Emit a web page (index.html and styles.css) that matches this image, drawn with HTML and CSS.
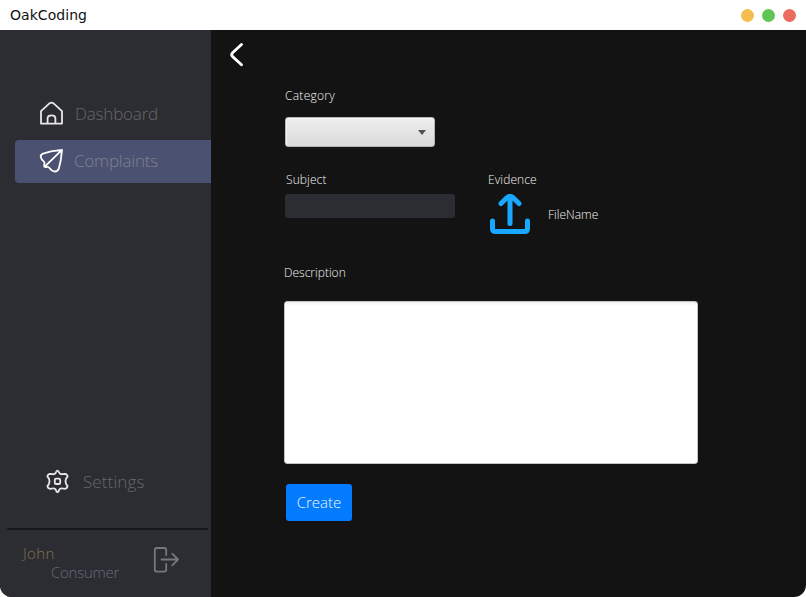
FILE: index.html
```html
<!DOCTYPE html>
<html lang="en">
<head>
<meta charset="utf-8">
<title>OakCoding</title>
<link rel="stylesheet" href="styles.css">
</head>
<body>
<div class="window">
  <header class="titlebar">
    <span class="title">OakCoding</span>
    <div class="controls"><i class="dot yellow"></i><i class="dot green"></i><i class="dot red"></i></div>
  </header>
  <div class="body">
    <aside class="sidebar">
      <nav class="nav">
        <a class="item dashboard">
          <svg width="26" height="26" viewBox="0 0 26 26"><path d="M3 22.6V10.2L11.7 2.2Q13.5 .9 15.3 2.2L24 10.2V22.6ZM9.6 22.4V17Q9.9 14.4 13.5 14.4T17.4 17V22.4"/></svg>
          <span>Dashboard</span>
        </a>
        <a class="item active">
          <svg width="26" height="26" viewBox="0 0 26 26"><path d="M24 1.8L13 3.4L5 5.6Q2 6.8 2.9 9.4Q3.5 12 5.8 13.6Q7.2 14.8 6.2 16.6Q5.6 19.6 8.3 19Q10.5 18.5 11.5 20Q13.5 22.8 16 23.4Q19.5 24 20.8 20.6L22.8 12ZM24 1.8L7 18.4"/></svg>
          <span>Complaints</span>
        </a>
      </nav>
      <a class="item settings">
        <svg width="26" height="26" viewBox="0 0 26 26"><path d="M13.5 2.6Q14.6 2.6 15 4.4Q16 6.6 18.2 6.2L20.8 5.8Q23.2 6 23.6 8.4L22 10.8Q20.8 13.3 22 15.8L23.6 18.2Q23.2 20.6 20.8 20.8L18.2 20.4Q16 20 15 22.2Q14.6 24 13.5 24Q12.4 24 12 22.2Q11 20 8.8 20.4L6.2 20.8Q3.8 20.6 3.4 18.2L5 15.8Q6.2 13.3 5 10.8L3.4 8.4Q3.8 6 6.2 5.8L8.8 6.2Q11 6.6 12 4.4Q12.4 2.6 13.5 2.6Z"/><rect x="10.8" y="10.6" width="5.4" height="5.4" rx="1.3"/></svg>
        <span>Settings</span>
      </a>
      <div class="divider"></div>
      <div class="profile">
        <div class="names"><span class="first">John</span><span class="role">Consumer</span></div>
        <svg class="logout" width="28" height="28" viewBox="0 0 28 28"><path d="M14.2 9V4Q14.2 2 12.2 2H4.8Q2.8 2 2.8 4V23.6Q2.8 25.6 4.8 25.6H12.2Q14.2 25.6 14.2 23.6V18M9.5 13.5H26M20.3 7.7L26 13.5L20.3 19.3"/></svg>
      </div>
    </aside>
    <main class="main">
      <svg class="back" width="16" height="26" viewBox="0 0 16 26"><path d="M12.5 2.4L3.6 10.8Q1.8 12.7 3.6 14.6L12.5 22.8"/></svg>
      <div class="form">
        <label class="label category">Category</label>
        <div class="select"><i class="arrow"></i></div>
        <div class="row">
          <div class="subject">
            <label class="label">Subject</label>
            <div class="input"></div>
          </div>
          <div class="evidence">
            <label class="label">Evidence</label>
            <div class="upload">
              <svg width="40" height="40" viewBox="0 0 40 40"><path d="M2.5 27V34.5Q2.5 37.5 5.5 37.5H34.5Q37.5 37.5 37.5 34.5V27M20 29.5V3M11 9.5L16.8 3.8Q20 1 23.2 3.8L29 9.5"/></svg>
              <span class="label filename">FileName</span>
            </div>
          </div>
        </div>
        <label class="label description">Description</label>
        <div class="textarea"></div>
        <button class="create">Create</button>
      </div>
    </main>
  </div>
</div>
</body>
</html>
```
FILE: styles.css
```css
* { box-sizing: border-box; }
body { margin: 0; background: #fff; font-family: "Open Sans", "Noto Sans", sans-serif; font-weight: 300; }
svg { display: block; flex: none; fill: none; stroke-linecap: round; stroke-linejoin: round; }
.window { width: 806px; height: 597px; display: flex; flex-direction: column; overflow: hidden; }
.titlebar { height: 30px; flex: none; display: flex; align-items: center; justify-content: space-between; padding: 0 10px; background: #fff; }
.title { font: 400 14px/30px "DejaVu Sans", sans-serif; color: #111; letter-spacing: 0.05px; }
.controls { display: flex; gap: 8px; }
.dot { width: 13px; height: 13px; border-radius: 50%; }
.yellow { background: #f5bd4f; }
.green { background: #61c554; }
.red { background: #ed6a5e; }
.body { flex: 1; display: flex; border-radius: 0 0 12px 12px; overflow: hidden; background: #131313; }

.sidebar { width: 211px; flex: none; display: flex; flex-direction: column; background: #2c2d32; }
.nav { padding: 63px 0 0 15px; }
.item { display: flex; align-items: center; font-size: 17px; line-height: 24px; letter-spacing: -0.2px; color: #66676b; }
.item svg { stroke: #e8e8e8; stroke-width: 1.8; }
.dashboard { height: 42px; padding-left: 23px; gap: 11px; margin-bottom: 5px; }
.active { height: 43px; padding: 0 0 1px 23px; gap: 10px; background: #4b5170; border-radius: 4px 0 0 4px; color: #7e8190; }
.active svg { stroke: #fff; }
.settings { margin: 286px 0 0 44px; height: 26px; gap: 13px; letter-spacing: 0.1px; }
.settings svg { margin-top: -2px; }
.divider { width: 201px; height: 2px; margin: 33px 0 0 7px; background: #17181a; border-radius: 1px; }
.profile { display: flex; padding: 14px 0 0 23px; }
.names { width: 129px; display: flex; flex-direction: column; font-size: 15px; line-height: 19px; }
.first { color: #80704b; letter-spacing: 0.4px; }
.role { padding-left: 28px; color: #686a7b; letter-spacing: -0.25px; }
.logout { stroke: #77787c; stroke-width: 1.8; margin-top: 2px; }

.main { flex: 1; padding: 12px 0 0 18px; }
.back { stroke: #fff; stroke-width: 2.8; }
.form { padding: 19px 0 0 55px; }
.label { display: block; font-size: 12px; line-height: 18px; color: #f4f4f4; }
.category { margin-left: 1px; letter-spacing: 0.28px; }
.select { width: 150px; height: 30px; margin: 12px 0 0 1px; padding-right: 8px; display: flex; align-items: center; justify-content: flex-end; border: 1px solid #b4b4b4; border-radius: 3px; background: linear-gradient(#efefef, #d9d9d9); box-shadow: inset 0 1px #fafafa, inset 1px 0 #f4f4f4; }
.arrow { border: 4.5px solid transparent; border-top: 5px solid #505050; border-bottom: 0; }
.row { display: flex; margin-top: 24px; }
.subject { width: 204px; }
.subject .label { margin-left: 2px; letter-spacing: 0.1px; }
.input { width: 170px; height: 24px; margin: 5px 0 0 1px; border-radius: 3px; background: #2c2d32; }
.evidence .label { letter-spacing: 0.1px; }
.upload { display: flex; align-items: center; gap: 18px; margin: 5px 0 0 2px; }
.upload svg { stroke: #18a8ff; stroke-width: 5; }
.upload .filename { padding-top: 2px; letter-spacing: 0; }
.description { margin-top: 30px; }
.textarea { width: 414px; height: 163px; margin-top: 19px; border: 1px solid #c4c4c4; border-radius: 3px; background: linear-gradient(#f1f1f1, #fff 4px); }
.create { display: block; width: 66px; height: 37px; margin: 20px 0 0 2px; padding: 0 0 1px; border: 0; border-radius: 3px; background: #027bff; color: #f4f8ff; font: inherit; font-size: 15px; }
```
